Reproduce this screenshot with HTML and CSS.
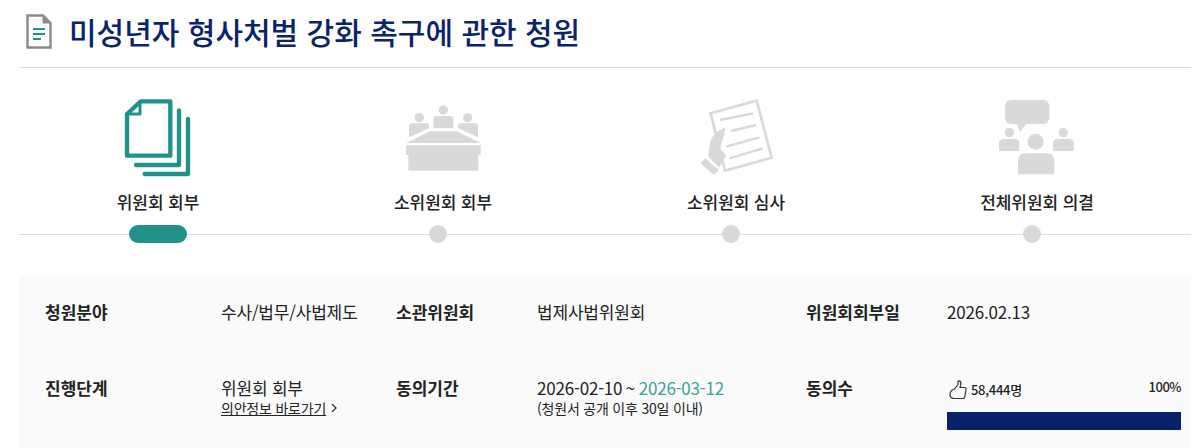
FILE: index.html
```html
<!DOCTYPE html>
<html lang="ko">
<head>
<meta charset="utf-8">
<title>미성년자 형사처벌 강화 촉구에 관한 청원</title>
<link rel="stylesheet" href="styles.css">
</head>
<body>
<main class="page">
  <header class="title-bar">
    <svg class="title-icon" viewBox="0 0 26 35" width="26" height="35">
      <path d="M1.500 1.500H17L24.500 9V33.500H1.500Z" fill="#fff" stroke="#8a8a8a" stroke-width="2.400"/>
      <path d="M17 1.500V9H24.500Z" fill="#8a8a8a" stroke="#8a8a8a" stroke-width="1"/>
      <path d="M7 15H19M7 20H19M7 25H15" fill="none" stroke="#21928a" stroke-width="1.800"/>
    </svg>
    <h1 class="title">미성년자 형사처벌 강화 촉구에 관한 청원</h1>
  </header>

  <section class="steps">
    <div class="step">
      <svg class="step-icon" viewBox="9 30 390 270" width="130" height="90">
        <g fill="none" stroke="#21928a" stroke-linejoin="round" stroke-linecap="round">
          <path d="M111 87L152 49H241V212H111Z" stroke-width="13"/>
          <path d="M111 87H150V52" stroke-width="9"/>
          <path d="M267 76V240H138" stroke-width="13"/>
          <path d="M294 102V267H164" stroke-width="13"/>
        </g>
      </svg>
      <div class="step-label">위원회 회부</div>
      <div class="marker marker-active"></div>
    </div>
    <div class="step">
      <svg class="step-icon" viewBox="-6 30 390 270" width="130" height="90">
        <g fill="#d9d9d9">
          <circle cx="190" cy="75" r="14"/>
          <circle cx="118" cy="98" r="14"/>
          <circle cx="263" cy="98" r="14"/>
          <path d="M160 130V103Q160 93 170 93H210Q220 93 220 103V130Z"/>
          <path d="M87 157V125Q87 115 97 115H137Q147 115 147 125V130Z"/>
          <path d="M234 130V125Q234 115 244 115H284Q294 115 294 125V157Z"/>
          <path d="M78 174L150 139H230L302 174Z"/>
          <path d="M78 181H302V210H295V257H85V210H78Z"/>
        </g>
      </svg>
      <div class="step-label">소위원회 회부</div>
      <div class="marker"></div>
    </div>
    <div class="step">
      <svg class="step-icon" viewBox="3 30 390 270" width="130" height="90">
        <path d="M122 85L260 47L305 218L165 257Z" fill="none" stroke="#d9d9d9" stroke-width="8"/>
        <path d="M150 105L250 85M183 138L258 120M168 185L268 157M178 220L278 190" fill="none" stroke="#d9d9d9" stroke-width="7"/>
        <path d="M166 127L162 150L150 190L168 212L148 248L114 214L122 165Q135 140 166 127Z" fill="#d9d9d9"/>
        <path d="M106 220L146 255L132 270L91 235Z" fill="#d9d9d9"/>
      </svg>
      <div class="step-label">소위원회 심사</div>
      <div class="marker"></div>
    </div>
    <div class="step">
      <svg class="step-icon" viewBox="6 30 390 270" width="130" height="90">
        <g fill="#d9d9d9">
          <rect x="105" y="45" width="133" height="72" rx="18"/>
          <path d="M138 112L150 141L172 112Z"/>
          <circle cx="118" cy="143" r="14"/>
          <circle cx="280" cy="143" r="14"/>
          <circle cx="197" cy="170" r="24"/>
          <path d="M87 198V176Q87 162 101 162H134Q148 162 148 176V198Z"/>
          <path d="M249 198V176Q249 162 263 162H297Q311 162 311 176V198Z"/>
          <path d="M144 268V227Q144 205 166 205H231Q253 205 253 227V268Z"/>
        </g>
      </svg>
      <div class="step-label">전체위원회 의결</div>
      <div class="marker"></div>
    </div>
  </section>

  <section class="info">
    <div class="info-label">청원분야</div>
    <div class="info-value">수사/법무/사법제도</div>
    <div class="info-label">소관위원회</div>
    <div class="info-value">법제사법위원회</div>
    <div class="info-label">위원회회부일</div>
    <div class="info-value">2026.02.13</div>

    <div class="info-label">진행단계</div>
    <div class="info-value">
      위원회 회부
      <a class="info-link" href="#"><span class="info-link-text">의안정보 바로가기</span>
        <svg class="chevron" viewBox="0 0 6 10" width="6" height="10"><path d="M1 1L5 5L1 9" fill="none" stroke="#333" stroke-width="1.300"/></svg>
      </a>
    </div>
    <div class="info-label">동의기간</div>
    <div class="info-value">
      <span class="date-range">2026-02-10 ~ <span class="date-end">2026-03-12</span></span>
      <span class="info-note">(청원서 공개 이후 30일 이내)</span>
    </div>
    <div class="info-label">동의수</div>
    <div class="info-value">
      <div class="agree-head">
        <span class="agree-count">
          <svg class="thumb" viewBox="0 0 18 20" width="18" height="20">
            <path d="M5.500 9L9 4.500V1.800Q9 .8 10.200 .8Q12.300 1.200 11.800 4.500L11 7.500H15.500Q17.300 7.700 17 9.500L15.800 16.800Q15.500 18.500 13.500 18.500H5Q1 18.300 1 14.500Q1 10.500 5.500 9Z" fill="none" stroke="#333" stroke-width="1.200" stroke-linejoin="round"/>
          </svg>
          58,444명
        </span>
        <span class="agree-percent">100%</span>
      </div>
      <div class="bar"><div class="bar-fill" style="width:100%"></div></div>
    </div>
  </section>
</main>
</body>
</html>
```
FILE: styles.css
```css
* { box-sizing: border-box; }
html, body { margin: 0; height: 448px; overflow: hidden; background: #fff; }
body {
  font-family: "Noto Sans CJK KR", "Noto Sans", sans-serif;
  color: #222;
}
.page { margin-left: 19px; width: 1172px; }

.title-bar {
  height: 68px;
  display: flex;
  align-items: center;
  gap: 17px;
  padding: 0 0 6px 7px;
  border-bottom: 1px solid #ddd;
}
.title-icon { flex: none; margin-top: 1px; }
.title {
  margin: 0;
  font-size: 30px;
  line-height: 40px;
  font-weight: 500;
  color: #0a2369;
}

.steps {
  display: grid;
  grid-template-columns: 278px 292px 294px 308px;
  padding-top: 27px;
  height: 207px;
  background: linear-gradient(#ddd, #ddd) no-repeat 0 166px / 100% 1px;
}
.step {
  display: flex;
  flex-direction: column;
  align-items: center;
}
.step-icon { display: block; flex: none; }
.step-label {
  margin-top: 5px;
  font-size: 17px;
  line-height: 24px;
  font-weight: 500;
  color: #222;
  letter-spacing: -0.1px;
}
.marker {
  margin-top: 11px;
  margin-right: 10px;
  width: 18px;
  height: 18px;
  border-radius: 9px;
  background: #d9d9d9;
}
.marker-active {
  margin-right: 0;
  width: 58px;
  background: #21928a;
}

.info {
  display: grid;
  grid-template-columns: 176px 175px 141px 269px 141px 234px;
  grid-template-rows: 24px auto;
  row-gap: 52px;
  padding: 25px 10px 0 26px;
  height: 173px;
  background: #fafafa;
  font-size: 17px;
  line-height: 24px;
}
.info-label { font-weight: 700; color: #222; }
.info-value { color: #222; letter-spacing: -0.2px; }
.info-link {
  display: flex;
  align-items: center;
  gap: 5px;
  font-size: 14px;
  line-height: 16px;
  color: #222;
  text-decoration: underline;
}
.info-link-text { line-height: 16px; }
.chevron { flex: none; }
.date-range { word-spacing: -1px; }
.date-end { color: #36a39b; }
.info-note {
  display: block;
  font-size: 14px;
  line-height: 16px;
}
.agree-head {
  display: flex;
  justify-content: space-between;
  align-items: flex-start;
  height: 36px;
  padding-top: 4px;
}
.agree-count {
  display: flex;
  align-items: center;
  gap: 4px;
  font-size: 13px;
  line-height: 20px;
  font-weight: 500;
  letter-spacing: -0.3px;
  color: #222;
}
.thumb { flex: none; margin-left: 2px; }
.agree-percent {
  font-size: 13px;
  line-height: 14px;
  font-weight: 500;
  letter-spacing: -0.5px;
  color: #222;
}
.bar { height: 18px; background: #eee; }
.bar-fill { height: 100%; background: #07226b; }
```
